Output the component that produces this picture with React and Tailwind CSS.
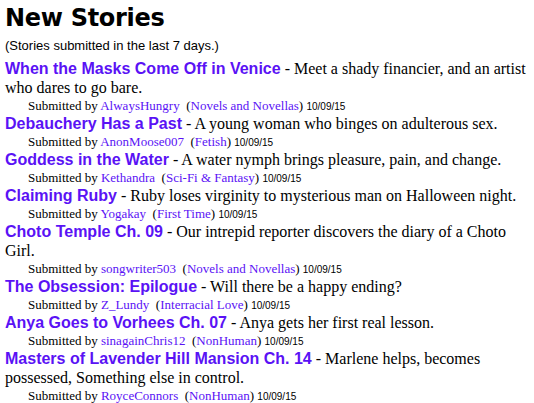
const stories = [
  { t: "When the Masks Come Off in Venice", d: "Meet a shady financier, and an artist who dares to go bare.", a: "AlwaysHungry", c: "Novels and Novellas" },
  { t: "Debauchery Has a Past", d: "A young woman who binges on adulterous sex.", a: "AnonMoose007", c: "Fetish" },
  { t: "Goddess in the Water", d: "A water nymph brings pleasure, pain, and change.", a: "Kethandra", c: "Sci-Fi & Fantasy" },
  { t: "Claiming Ruby", d: "Ruby loses virginity to mysterious man on Halloween night.", a: "Yogakay", c: "First Time" },
  { t: "Choto Temple Ch. 09", d: "Our intrepid reporter discovers the diary of a Choto Girl.", a: "songwriter503", c: "Novels and Novellas" },
  { t: "The Obsession: Epilogue", d: "Will there be a happy ending?", a: "Z_Lundy", c: "Interracial Love" },
  { t: "Anya Goes to Vorhees Ch. 07", d: "Anya gets her first real lesson.", a: "sinagainChris12", c: "NonHuman" },
  { t: "Masters of Lavender Hill Mansion Ch. 14", d: "Marlene helps, becomes possessed, Something else in control.", a: "RoyceConnors", c: "NonHuman" },
];

export default function App() {
  return (
    <div className="bg-white w-[534px] h-[403px] overflow-hidden pl-[5px] pr-[8px] text-black">
      <h1 className="font-['DejaVu_Sans',Verdana,sans-serif] font-bold text-[24px] leading-[28px] pt-[4px] tracking-[-0.3px]">New Stories</h1>
      <p className="font-['Liberation_Sans',Arial,sans-serif] text-[13px] leading-[15px] mt-[6px] mb-[6px]">(Stories submitted in the last 7 days.)</p>
      <div className="flex flex-col">
        {stories.map((s) => (
          <div key={s.t} className="flex flex-col">
            <div className="font-['Liberation_Serif','Times_New_Roman',serif] text-[16px] leading-[19px]">
              <span className="font-['Liberation_Sans',Arial,sans-serif] font-bold text-[#5a12f5] leading-[1]">{s.t}</span>
              {" - "}
              {s.d}
            </div>
            <div className="pl-[23px] leading-[17px] font-['Liberation_Serif','Times_New_Roman',serif] text-[13px]">
              Submitted by <span className="text-[#5a12f5]">{s.a}</span>
              {"\u00a0 "}(<span className="text-[#5a12f5]">{s.c}</span>){" "}
              <span className="font-['Liberation_Sans',Arial,sans-serif] text-[10px] leading-[1]">10/09/15</span>
            </div>
          </div>
        ))}
      </div>
    </div>
  );
}
